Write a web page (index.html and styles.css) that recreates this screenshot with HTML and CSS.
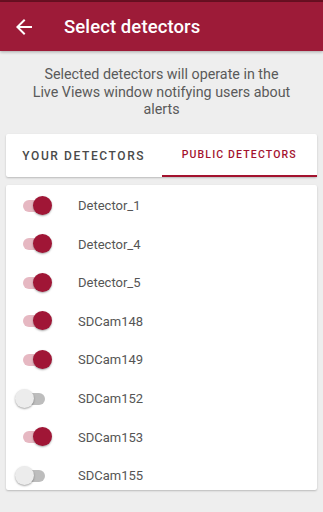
FILE: index.html
```html
<!DOCTYPE html>
<html>
<head>
<meta charset="utf-8">
<link rel="stylesheet" href="styles.css">
</head>
<body>
<div class="statusbar"></div>
<header class="toolbar">
  <svg class="back" width="24" height="24" viewBox="0 0 24 24"><path d="M20 11H7.83l5.59-5.59L12 4l-8 8 8 8 1.41-1.41L7.83 13H20v-2z" fill="#fff"/></svg>
  <h1 class="title">Select detectors</h1>
</header>
<main class="content">
  <p class="intro">Selected detectors will operate in the Live Views window notifying users about alerts</p>
  <nav class="tabs">
    <div class="tab">YOUR DETECTORS</div>
    <div class="tab active">PUBLIC DETECTORS</div>
  </nav>
  <section class="list">
    <div class="row"><span class="switch on"><span class="track"></span><span class="thumb"></span></span><span class="label">Detector_1</span></div>
    <div class="row"><span class="switch on"><span class="track"></span><span class="thumb"></span></span><span class="label">Detector_4</span></div>
    <div class="row"><span class="switch on"><span class="track"></span><span class="thumb"></span></span><span class="label">Detector_5</span></div>
    <div class="row"><span class="switch on"><span class="track"></span><span class="thumb"></span></span><span class="label">SDCam148</span></div>
    <div class="row"><span class="switch on"><span class="track"></span><span class="thumb"></span></span><span class="label">SDCam149</span></div>
    <div class="row"><span class="switch"><span class="track"></span><span class="thumb"></span></span><span class="label">SDCam152</span></div>
    <div class="row"><span class="switch on"><span class="track"></span><span class="thumb"></span></span><span class="label">SDCam153</span></div>
    <div class="row"><span class="switch"><span class="track"></span><span class="thumb"></span></span><span class="label">SDCam155</span></div>
  </section>
</main>
</body>
</html>
```
FILE: styles.css
```css
html, body {
  margin: 0;
  padding: 0;
  background: #eeeeee;
  font-family: Roboto, "Noto Sans", sans-serif;
  width: 323px;
  height: 512px;
  overflow: hidden;
}
.statusbar {
  height: 2px;
  background: #6a1022;
}
.toolbar {
  height: 49px;
  background: #9d1b38;
  display: flex;
  align-items: center;
  box-shadow: 0 1px 3px rgba(0,0,0,0.3);
  position: relative;
  z-index: 1;
}
.back {
  margin-left: 12px;
  margin-right: 28px;
  flex: none;
}
.title {
  margin: 0;
  color: #fff;
  font-size: 18.5px;
  font-weight: 500;
  letter-spacing: 0.1px;
}
.content {
  padding: 0 6px 0 6px;
}
.intro {
  margin: 15px 24px 0 24px;
  text-align: center;
  color: #5a5a5a;
  font-size: 14.3px;
  line-height: 17.6px;
}
.tabs {
  margin-top: 15px;
  height: 43px;
  background: #fff;
  display: flex;
  border-radius: 2px;
  box-shadow: 0 1px 2px rgba(0,0,0,0.22);
}
.tab {
  flex: 1;
  display: flex;
  align-items: center;
  justify-content: center;
  font-size: 12px;
  font-weight: 500;
  letter-spacing: 1.6px;
  color: #4a4a4a;
  padding-top: 1px;
}
.tab.active {
  color: #a3122e;
  font-size: 10.5px;
  letter-spacing: 1.15px;
  border-bottom: 2px solid #a3122e;
}
.list {
  margin-top: 8px;
  height: 305px;
  box-sizing: border-box;
  padding-top: 1.5px;
  overflow: hidden;
  background: #fff;
  border-radius: 2px;
  box-shadow: 0 1px 2px rgba(0,0,0,0.22);
}
.row {
  height: 38.6px;
  display: flex;
  align-items: center;
}
.switch {
  position: relative;
  width: 32px;
  height: 20px;
  margin-left: 8px;
  flex: none;
}
.track {
  position: absolute;
  left: 9px;
  top: 4px;
  width: 22px;
  height: 12px;
  border-radius: 6px;
  background: #bdbdbd;
}
.thumb {
  position: absolute;
  left: 1px;
  top: 0;
  width: 19px;
  height: 19px;
  border-radius: 50%;
  background: #ececec;
  box-shadow: 0 1px 2px rgba(0,0,0,0.35);
}
.switch.on .track {
  background: #e6b8c2;
}
.switch.on .thumb {
  left: 19px;
  background: #a01636;
}
.label {
  margin-left: 32px;
  font-size: 13px;
  color: #555;
}
```
